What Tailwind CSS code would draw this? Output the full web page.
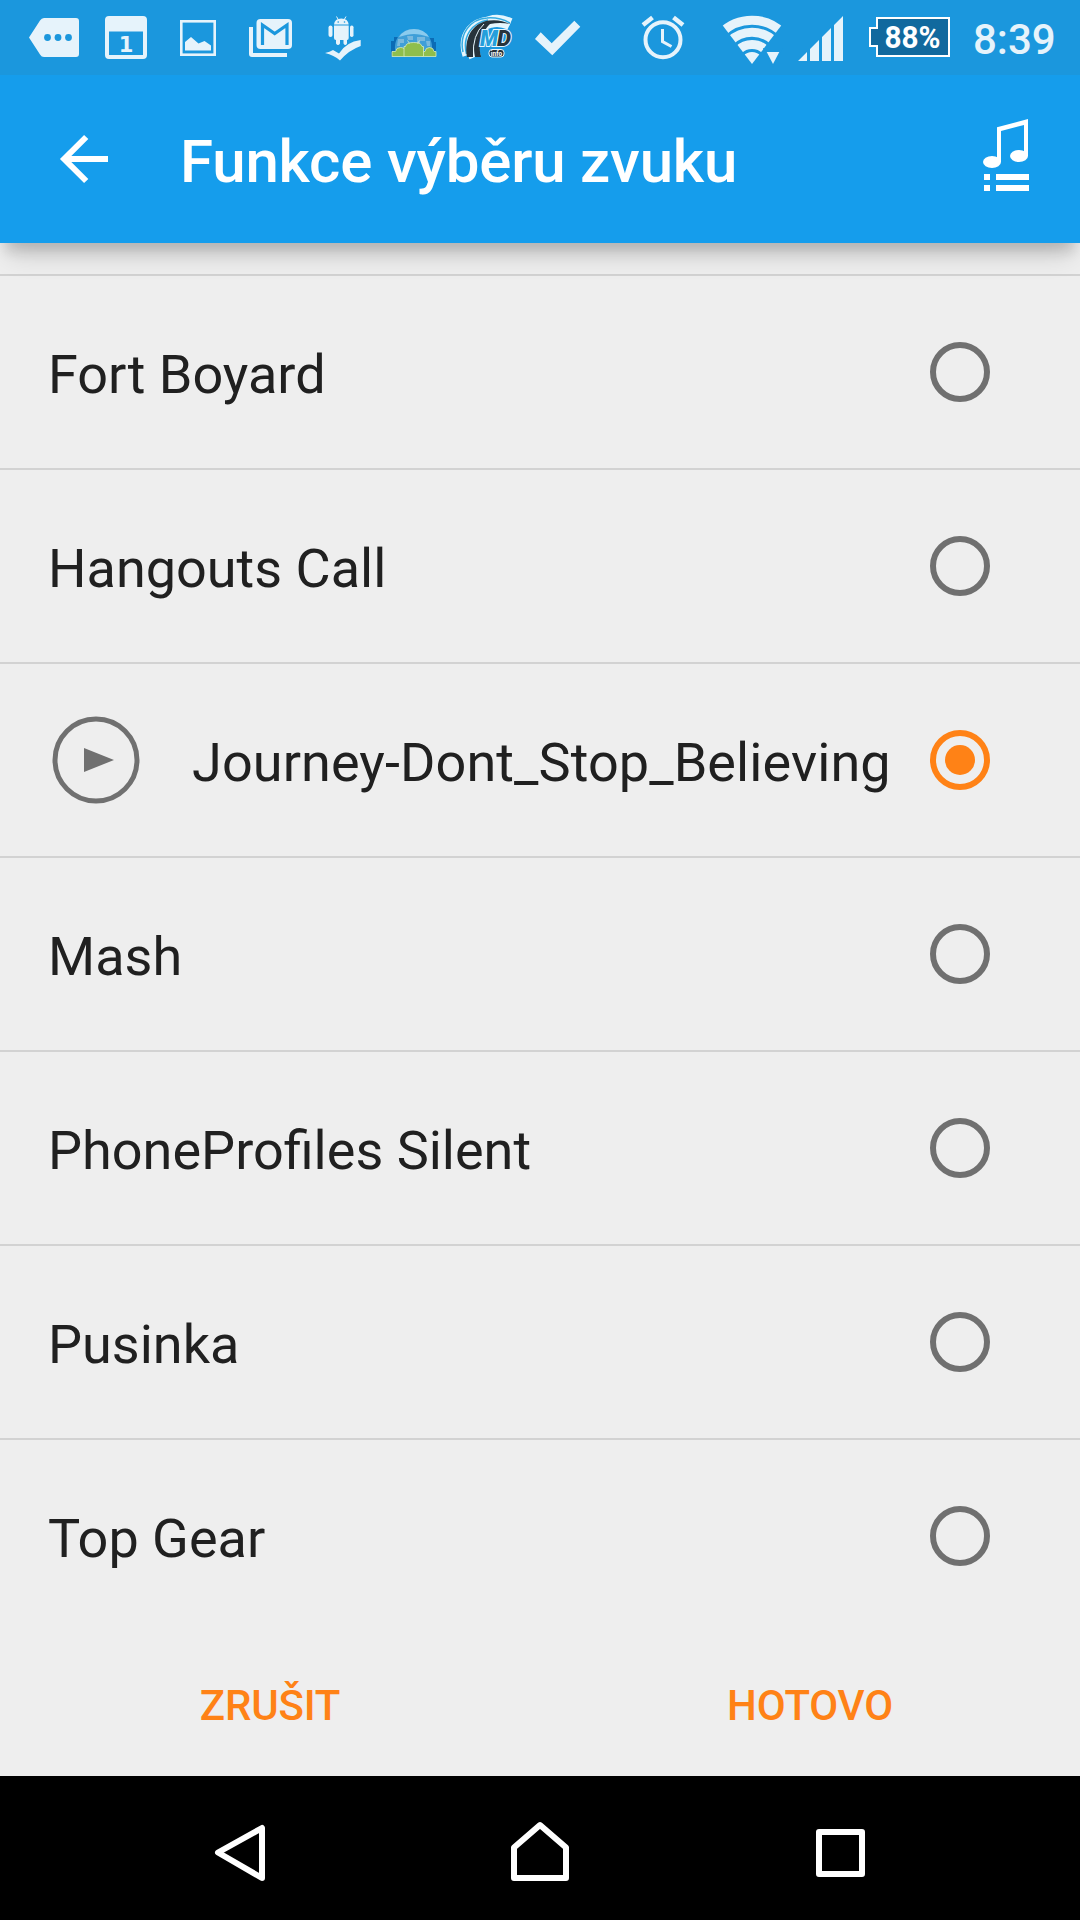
<!DOCTYPE html>
<html lang="cs">

<head>
    <meta charset="UTF-8">
    <meta name="viewport" content="width=device-width, initial-scale=1.0">
    <title>Funkce výběru zvuku</title>
    <script src="https://cdn.jsdelivr.net/npm/@tailwindcss/browser@4"></script>
</head>

<body class="bg-[#eeeeee] font-['Roboto',sans-serif] text-[#202020]">
    <div class="flex h-[1920px] w-[1080px] flex-col overflow-hidden">

        <!-- Status bar -->
        <div class="relative z-10 flex h-[75px] shrink-0 bg-[#1b97dd] text-[#e6f3fb]">
            <svg class="h-[75px] w-[90px]" viewBox="0 0 90 75" fill="currentColor">
                <path d="M29 37.500L40 20.500Q41.500 18 44 18H76Q79 18 79 21V54Q79 57 76 57H44Q41.500 57 40 54.500Z" />
                <g fill="#1b97dd"><circle cx="47.500" cy="37.500" r="3.400" /><circle cx="58" cy="37.500" r="3.400" /><circle cx="68.500" cy="37.500" r="3.400" /></g>
            </svg>
            <svg class="h-[75px] w-[75px]" viewBox="90 0 75 75" fill="currentColor">
                <path fill-rule="evenodd" d="M109 16H143Q147 16 147 20V55Q147 59 143 59H109Q105 59 105 55V20Q105 16 109 16ZM109 31.500V55H143V31.500Z" />
                <text x="126" y="51.500" text-anchor="middle" class="font-['DejaVu_Sans'] text-[21px] font-bold">1</text>
            </svg>
            <svg class="h-[75px] w-[70px]" viewBox="165 0 70 75" fill="currentColor">
                <rect x="181.300" y="21.300" width="33.400" height="33.400" fill="none" stroke="currentColor" stroke-width="2.600" />
                <path d="M185 50.500V42L191 37L198.500 43.500L204.500 41L211 45.500V50.500Z" />
            </svg>
            <svg class="h-[75px] w-[75px]" viewBox="235 0 75 75" fill="currentColor">
                <path d="M249 27H253V53H287V57H252Q249 57 249 54Z" />
                <rect x="256.500" y="19" width="35.500" height="30" rx="4" />
                <path d="M262.500 45V25L274.700 33.500L287 25V45" fill="none" stroke="#1b97dd" stroke-width="3.200" />
            </svg>
            <svg class="h-[75px] w-[70px]" viewBox="310 0 70 75" fill="currentColor">
                <path d="M334 24.500Q334.500 18.500 341.300 18.500T348.700 24.500Z" />
                <path d="M336.500 16.500L338.500 20M346 16.500L344 20" stroke="currentColor" />
                <path d="M334 25.500H348.700V38Q348.700 40 347 40V43.500Q345.300 46.500 343.500 43.500V40H340V43.500Q338 46.500 336 43.500V40Q334 40 334 38Z" />
                <rect x="328.500" y="25.500" width="4" height="11.500" rx="2" /><rect x="350" y="25.500" width="3.500" height="11.500" rx="1.700" />
                <path d="M325 53Q330 52 333 50L339 53.500Q346 42 360.700 40V46Q349 50 340 60.500Q334 55 325 53Z" />
                <g fill="#1b97dd"><circle cx="338.200" cy="22" r=".8" /><circle cx="344.500" cy="22" r=".8" /></g>
            </svg>
            <svg class="h-[75px] w-[75px]" viewBox="380 0 75 75">
                <path d="M391 56V41L394 41V37H399V41L402 38V56ZM425 56V38H434V42H436V50L434 56Z" fill="#0b6bb5" />
                <path d="M395 50C393 22 434 22 432 50Z" fill="#3f9fd8" />
                <path d="M399 37Q404 29 414 29Q424 29 429 37Q420 34 414 34T399 37Z" fill="#8acbee" />
                <path d="M398 39H404V43H400V46H397ZM407 36H413V40H408ZM417 37H425V41H420V44H417ZM426 41H430V46H427Z" fill="#79b9de" />
                <g fill="#8fbe4c" stroke="#d5ebc0" stroke-width=".8">
                    <path d="M392 56.500V51.500H395.500Q396 47.500 400.500 47.500T405 51.500V56.500ZM422 56.500V51.500H425Q425.500 47.500 429.500 47.500T434 51.500H436V56.500Z" />
                    <path d="M404 56.500V46.500H405.500Q406 42.500 413.700 42.500T422 46.500H423.500V56.500Z" />
                    <path d="M407.500 40.500L409.500 43.500M419.500 40.500L417.500 43.500" />
                </g>
            </svg>
            <svg class="h-[75px] w-[70px]" viewBox="455 0 70 75">
                <g fill="none">
                    <path d="M465 56C459 38 468 24 483 20Q496 17 510 24" stroke="#e6f6fd" stroke-width="5" />
                    <path d="M475 57C468 40 474 26 490 22Q499 19 510 24" stroke="#e6f6fd" stroke-width="12" />
                    <path d="M463 52C459 34 470 19 487 18Q499 17 510 23M466.500 54C462 36 472 23 488 20" stroke="#35abe1" stroke-width="1.500" />
                </g>
                <path d="M467 57C464 38 472 23 489 20.500Q500 19 510 24Q500 22 490 24C478 27 473 38 473 57Z" fill="#27333b" />
                <path d="M475 57C472 40 475 27 492 21.500Q482 32 480 41Q479 50 481 57Z" fill="#27333b" />
                <path d="M473.500 56Q472 35 484 24" fill="none" stroke="#e6f6fd" />
                <g class="font-['Roboto'] text-[22px] font-black italic" stroke="#e6f6fd" stroke-width="2" paint-order="stroke">
                    <text x="480" y="46" fill="#249fdb" textLength="18" lengthAdjust="spacingAndGlyphs">M</text>
                    <text x="497" y="46" fill="#27333b" textLength="14" lengthAdjust="spacingAndGlyphs">D</text>
                </g>
                <rect x="489" y="49.500" width="15" height="7.500" rx="3" fill="#27333b" stroke="#e6f6fd" />
                <text x="496.500" y="55.800" text-anchor="middle" fill="#fff" class="font-['Roboto'] text-[6.5px] font-bold">info</text>
            </svg>
            <svg class="h-[75px] w-[100px]" viewBox="525 0 100 75" fill="currentColor">
                <path d="M535 39L540.700 32.300L551.700 43.300L574.300 20.700L580.300 26.700L552.300 55.300Z" />
            </svg>
            <svg class="h-[75px] w-[80px]" viewBox="625 0 80 75" fill="none" stroke="currentColor">
                <circle cx="663" cy="39.700" r="17.500" stroke-width="4" />
                <path d="M662.500 29V41.500L671.500 46.500" stroke-width="3" />
                <path d="M643 25L652.500 17.500M673.500 17.500L683 25" stroke-width="4.500" />
            </svg>
            <svg class="h-[75px] w-[85px]" viewBox="705 0 85 75">
                <clipPath id="fan"><path d="M752 64L715.500 16V0H788.500V16Z" /></clipPath>
                <g clip-path="url(#fan)" fill="none" stroke="currentColor" stroke-width="9">
                    <circle cx="752" cy="64" r="43.800" /><circle cx="752" cy="64" r="31.800" /><circle cx="752" cy="64" r="19.500" />
                    <circle cx="752" cy="64" r="6" stroke-width="12" />
                </g>
                <path d="M763 48H783L773 68Z" fill="#1b97dd" />
                <path d="M766.700 52H779.300L773 64Z" fill="currentColor" />
            </svg>
            <svg class="h-[75px] w-[70px]" viewBox="790 0 70 75" fill="currentColor">
                <path d="M798 61L807 52V61ZM810 61V49L819 40V61ZM822 61V37L831 28V61ZM834 61V25L843 16V61Z" />
            </svg>
            <svg class="h-[75px] w-[110px]" viewBox="860 0 110 75">
                <path d="M877 18H949V56H877V46H870V28H877Z" fill="#11699e" stroke="#fff" stroke-width="2" />
                <text x="912.500" y="48" text-anchor="middle" fill="#fff" textLength="56" lengthAdjust="spacingAndGlyphs" class="font-['Roboto'] text-[32px] font-bold">88%</text>
            </svg>
            <span class="ml-[3px] pt-[2px] text-[42px] leading-[75px] font-medium">8:39</span>
        </div>

        <!-- Toolbar -->
        <div class="relative flex h-[168px] shrink-0 items-center bg-[#159dec] text-white shadow-[0_14px_12px_-6px_rgba(0,0,0,0.14),0_20px_24px_-8px_rgba(0,0,0,0.14)]">
            <svg class="ml-[54px] h-[60px] w-[60px]" viewBox="54 129 60 60" fill="none" stroke="currentColor" stroke-width="6">
                <path d="M108 159H64M86.200 137L64.200 159L86.200 181" />
            </svg>
            <h1 class="ml-[66px] flex-1 pt-[5px] text-[60px] leading-[70px] font-medium tracking-[-0.19px]">Funkce výběru zvuku</h1>
            <svg class="mr-[42px] h-[84px] w-[60px]" viewBox="978 117 60 84" fill="currentColor">
                <path d="M997 127.300L1028 119V156H1024V125L1001 131V162H997Z" />
                <ellipse cx="992" cy="162" rx="9" ry="6" /><ellipse cx="1019" cy="156" rx="9" ry="6" />
                <path d="M984 174H990V180H984ZM996 174H1029V180H996ZM984 185H990V191H984ZM996 185H1029V191H996Z" />
            </svg>
        </div>

        <!-- Sound list -->
        <ul class="mt-[31px] text-[54px] leading-[64px]">
            <li class="flex h-[194px] items-center border-t-2 border-[#d2d2d2] pr-[90px] pl-12">
                <span class="flex-1 pt-[5px]">Fort Boyard</span>
                <span class="size-[60px] rounded-full border-6 border-[#707070]"></span>
            </li>
            <li class="flex h-[194px] items-center border-t-2 border-[#d2d2d2] pr-[90px] pl-12">
                <span class="flex-1 pt-[5px]">Hangouts Call</span>
                <span class="size-[60px] rounded-full border-6 border-[#707070]"></span>
            </li>
            <li class="flex h-[194px] items-center border-t-2 border-[#d2d2d2] pr-[90px] pl-12">
                <svg class="mr-12 size-24" viewBox="0 0 96 96">
                    <circle cx="48" cy="48" r="41" fill="none" stroke="#707070" stroke-width="5" />
                    <path d="M36 36L66 48L36 60Z" fill="#707070" />
                </svg>
                <span class="flex-1 pt-[5px] tracking-[0.09px]">Journey-Dont_Stop_Believing</span>
                <span class="flex size-[60px] items-center justify-center rounded-full border-6 border-[#ff8216]">
                    <span class="size-[30px] rounded-full bg-[#ff8216]"></span>
                </span>
            </li>
            <li class="flex h-[194px] items-center border-t-2 border-[#d2d2d2] pr-[90px] pl-12">
                <span class="flex-1 pt-[5px]">Mash</span>
                <span class="size-[60px] rounded-full border-6 border-[#707070]"></span>
            </li>
            <li class="flex h-[194px] items-center border-t-2 border-[#d2d2d2] pr-[90px] pl-12">
                <span class="flex-1 pt-[5px]">PhoneProfiles Silent</span>
                <span class="size-[60px] rounded-full border-6 border-[#707070]"></span>
            </li>
            <li class="flex h-[194px] items-center border-t-2 border-[#d2d2d2] pr-[90px] pl-12">
                <span class="flex-1 pt-[5px]">Pusinka</span>
                <span class="size-[60px] rounded-full border-6 border-[#707070]"></span>
            </li>
            <li class="flex h-[194px] items-center border-t-2 border-[#d2d2d2] pr-[90px] pl-12">
                <span class="flex-1 pt-[5px]">Top Gear</span>
                <span class="size-[60px] rounded-full border-6 border-[#707070]"></span>
            </li>
        </ul>

        <!-- Dialog buttons -->
        <div class="grid h-36 shrink-0 grid-cols-2 text-[42px] font-medium tracking-[-0.2px] text-[#ff8216]">
            <button class="pt-[3px]">ZRUŠIT</button>
            <button class="pt-[3px]">HOTOVO</button>
        </div>

        <!-- Navigation bar -->
        <div class="flex h-36 shrink-0 items-center justify-center bg-black">
            <svg class="h-36 w-[300px]" viewBox="90 1776 300 144" fill="none" stroke="#fff" stroke-width="6" stroke-linejoin="round">
                <path d="M218 1852.500L262 1828V1878Z" />
            </svg>
            <svg class="h-36 w-[300px]" viewBox="390 1776 300 144" fill="none" stroke="#fff" stroke-width="6" stroke-linejoin="round">
                <path d="M514 1847.500L540 1825L566 1847.500V1878H514Z" />
            </svg>
            <svg class="h-36 w-[300px]" viewBox="690 1776 300 144" fill="none" stroke="#fff" stroke-width="6" stroke-linejoin="round">
                <path d="M819 1832H862V1874H819Z" />
            </svg>
        </div>
    </div>
</body>

</html>
